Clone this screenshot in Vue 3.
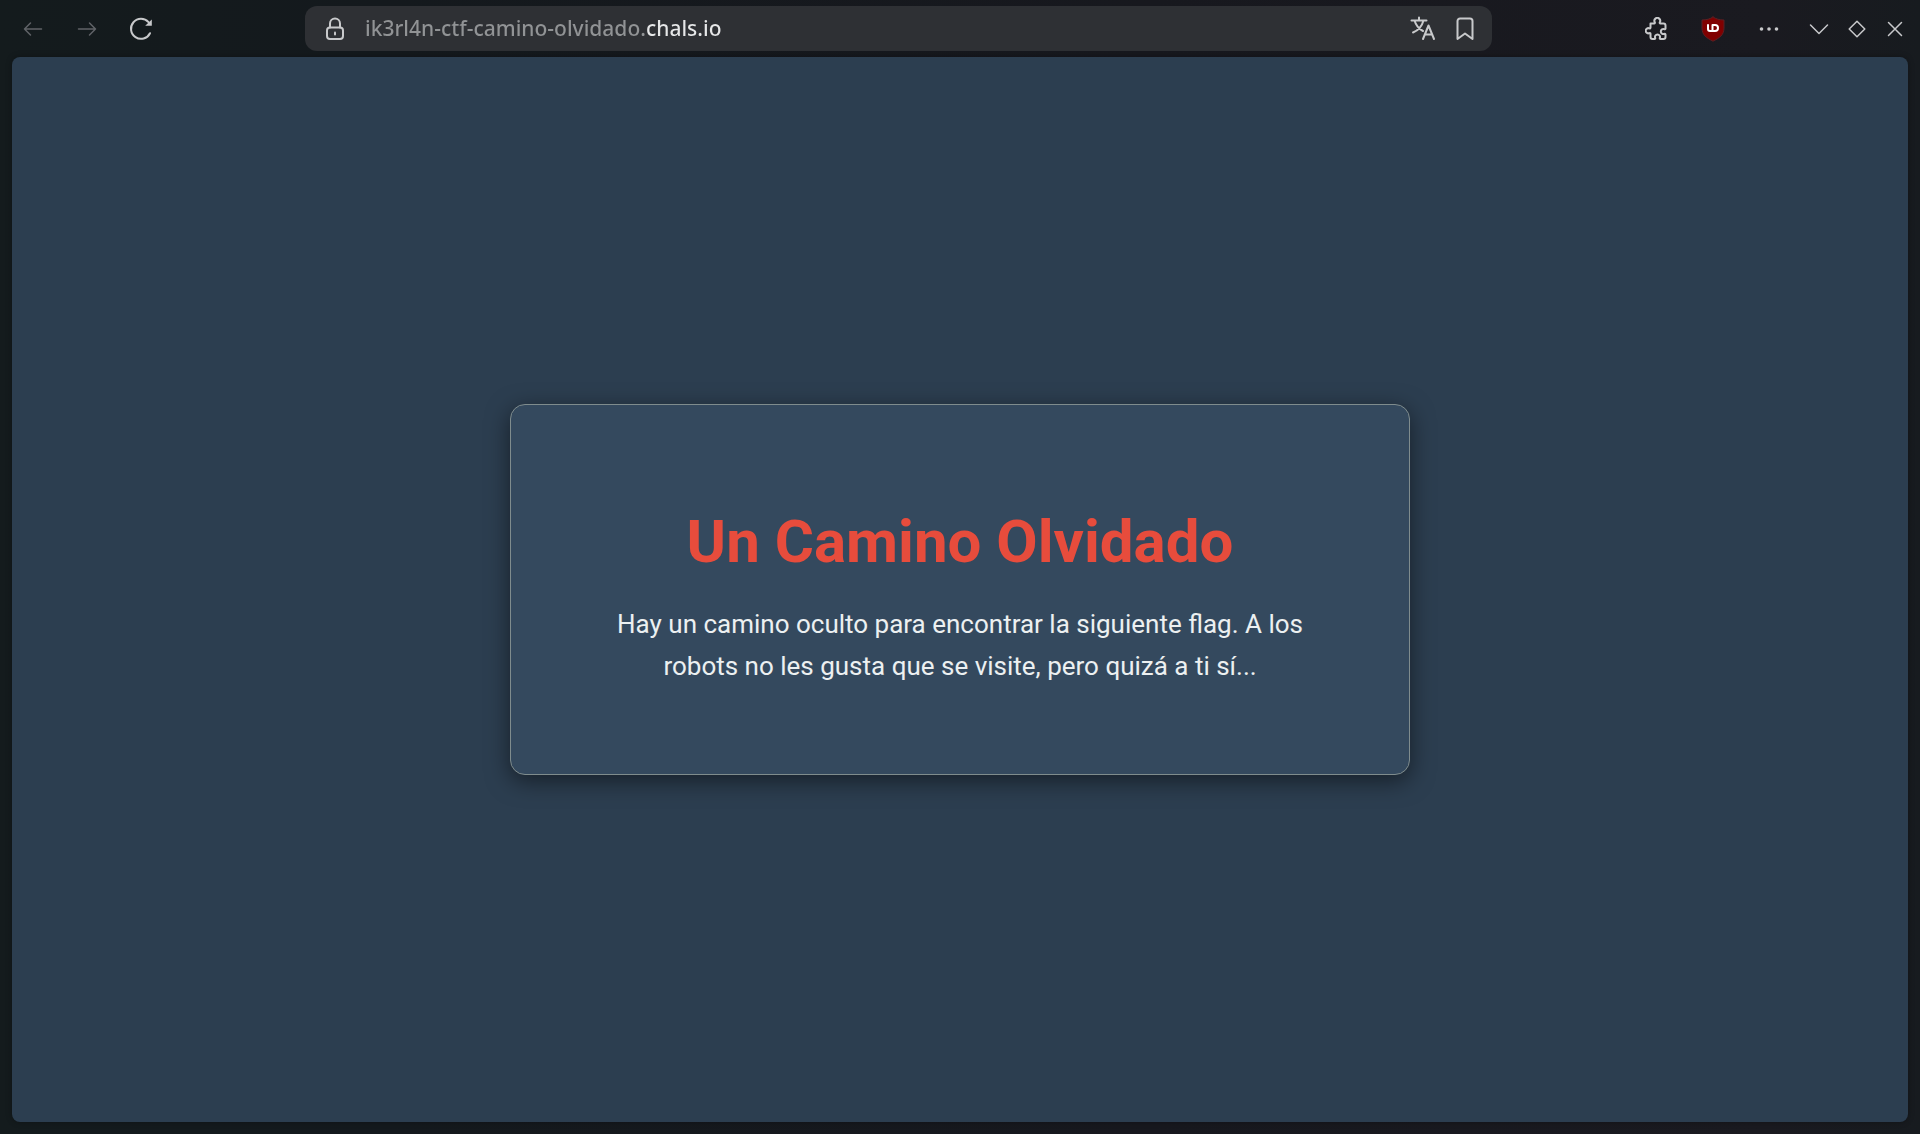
<script setup>
import { ref } from 'vue'

const address = ref('ik3rl4n-ctf-camino-olvidado.chals.io')
</script>

<template>
  <div class="browser">
    <header class="toolbar">
      <nav class="nav" aria-label="Navegación">
        <button type="button" class="tool wide dim" aria-label="Atrás">
          <svg width="20" height="16" viewBox="0 0 20 16"><path d="M18.5 8H1.5M7.5 2L1.5 8l6 6" /></svg>
        </button>
        <button type="button" class="tool wide dim" aria-label="Adelante">
          <svg width="20" height="16" viewBox="0 0 20 16"><path d="M1.5 8h17M12.5 2l6 6-6 6" /></svg>
        </button>
        <button type="button" class="tool wide" aria-label="Recargar">
          <svg width="24" height="24" viewBox="0 0 24 24">
            <path class="bold" d="M21 16.2A10 10 0 1 1 19.5 5.2" />
            <path class="solid" d="M22.8 2.5v6.3h-6.6z" />
          </svg>
        </button>
      </nav>

      <form class="address" @submit.prevent>
        <button type="button" class="tool lock" aria-label="Información del sitio">
          <svg width="20" height="24" viewBox="0 0 20 24">
            <rect class="bold" x="2" y="10.5" width="16" height="11.5" rx="3" />
            <path class="bold" d="M5 10.5V6.500a5 5 0 0 1 10 0v4" />
            <path class="bold" d="M10 15.500v2" />
          </svg>
        </button>
        <input v-model="address" class="url" type="text" aria-label="Dirección" spellcheck="false" />
        <button type="button" class="tool small" aria-label="Traducir">
          <svg width="26" height="26" viewBox="0 1 26 26">
            <path class="bold" d="M1.5 5.5h15M9 2.500v3M4.500 5.500c1.500 5 4.500 8.500 8.500 10.500M13.500 5.500C12 11 8 15.500 3 17.500" />
            <path class="bold" d="M13 24l5.500-13.500L24 24M15 19.500h7" />
          </svg>
        </button>
        <button type="button" class="tool small" aria-label="Guardar marcador">
          <svg width="18" height="24" viewBox="0 0 18 24"><path class="bold" d="M1.500 22V4a2.500 2.500 0 0 1 2.500-2.500h10A2.500 2.500 0 0 1 16.500 4v18L9 16.500z" /></svg>
        </button>
      </form>

      <div class="extensions">
        <button type="button" class="tool extension" aria-label="Extensiones">
          <svg width="24" height="24" viewBox="0 0 24 24">
            <path class="bold" d="M5.500 6.500h3.700a.8.8 0 0 0 .6-1.200 2.900 2.900 0 1 1 5 0 .8.8 0 0 0 .6 1.200h3.100a2 2 0 0 1 2 2v3a.8.8 0 0 1-1.200.7 2.500 2.500 0 1 0 0 4.600.8.8 0 0 1 1.200.7V20a2 2 0 0 1-2 2h-3a.8.8 0 0 1-.7-1.100 2.500 2.500 0 1 0-4.600 0 .8.8 0 0 1-.7 1.100h-2a2 2 0 0 1-2-2v-3.200a.8.8 0 0 0-1.100-.7 2.600 2.600 0 1 1 0-4.700.8.8 0 0 0 1.100-.7z" />
          </svg>
        </button>
        <button type="button" class="tool extension" aria-label="uBlock Origin">
          <svg width="24" height="26" viewBox="0 0 24 26">
            <path class="shield" d="M12 1c3 2 6.500 3 11 3v8c0 7-4.500 10-11 13.200C5.500 22 1 19 1 12V4c4.500 0 8-1 11-3z" />
            <path class="badge" d="M7 9v4a2 2 0 0 0 2 2h2.500V9h2.500a3 3 0 0 1 0 6h-2.500" />
          </svg>
        </button>
        <button type="button" class="tool extension" aria-label="Menú">
          <svg width="22" height="6" viewBox="0 0 22 6">
            <circle class="solid" cx="3.500" cy="3" r="1.800" />
            <circle class="solid" cx="11" cy="3" r="1.800" />
            <circle class="solid" cx="18.500" cy="3" r="1.800" />
          </svg>
        </button>
      </div>

      <div class="window-controls">
        <button type="button" class="tool control" aria-label="Minimizar">
          <svg width="20" height="18" viewBox="0 0 20 18"><path d="M1.500 5L10 13.500 18.500 5" /></svg>
        </button>
        <button type="button" class="tool control" aria-label="Restaurar">
          <svg width="18" height="18" viewBox="0 0 18 18"><path d="M9 1.200L16.800 9 9 16.800 1.200 9z" /></svg>
        </button>
        <button type="button" class="tool control" aria-label="Cerrar">
          <svg width="16" height="16" viewBox="0 0 16 16"><path d="M1.500 1.500l13 13M14.500 1.500l-13 13" /></svg>
        </button>
      </div>
    </header>

    <main class="page">
      <section class="card">
        <h1>Un Camino Olvidado</h1>
        <p>Hay un camino oculto para encontrar la siguiente flag. A los robots no les gusta que se visite, pero quizá a ti sí...</p>
      </section>
    </main>
  </div>
</template>

<style>
body {
  margin: 0;
}
</style>

<style scoped>
.browser {
  box-sizing: border-box;
  min-height: 100vh;
  display: flex;
  flex-direction: column;
  padding: 0 12px 12px;
  background: linear-gradient(90deg, #141b1d, #14191d 20%, #17181e 60%, #1a1a20 92%, #171b1f);
}

.toolbar {
  display: flex;
  align-items: center;
  height: 57px;
  margin: 0 -6px;
}

.nav,
.extensions,
.window-controls {
  display: flex;
}

.window-controls {
  margin-left: 3px;
}

.tool {
  display: flex;
  flex: none;
  align-items: center;
  justify-content: center;
  height: 44px;
  padding: 0;
  border: 0;
  background: none;
  color: #c8c9cb;
}

.wide {
  width: 54px;
}

.extension {
  width: 56px;
}

.control {
  width: 38px;
}

.small {
  width: 42px;
}

.lock {
  width: 60px;
}

.dim {
  color: #606367;
}

svg {
  display: block;
  fill: none;
  stroke: currentColor;
  stroke-width: 1.5;
  stroke-linecap: round;
  stroke-linejoin: round;
}

.bold {
  stroke-width: 2;
}

.solid {
  fill: currentColor;
  stroke: none;
}

.shield {
  fill: #800000;
  stroke: #5a2024;
  stroke-width: 1;
}

.badge {
  stroke: #ffffff;
  stroke-width: 2;
}

.address {
  display: flex;
  flex: 1;
  align-items: center;
  min-width: 0;
  height: 45px;
  margin: 0 137px;
  padding-right: 6px;
  border-radius: 12px;
  box-sizing: border-box;
  background: #2e3034;
}

.url {
  box-sizing: border-box;
  flex: 1;
  min-width: 0;
  height: 44px;
  padding: 0 0 2px;
  border: 0;
  outline: 0;
  background: linear-gradient(90deg, #919395 280px, #e6e7e8 280px);
  background-clip: text;
  color: transparent;
  font: 500 21px "Noto Sans", sans-serif;
}

.page {
  display: flex;
  flex: 1;
  align-items: center;
  justify-content: center;
  border-radius: 8px;
  background: #2c3e50;
  box-shadow: 0 0 6px rgba(0, 0, 0, 0.3);
  font-family: Roboto, sans-serif;
}

.card {
  box-sizing: border-box;
  width: 100%;
  max-width: 900px;
  padding: 60px 72px;
  border: 1px solid #7f8c8d;
  border-radius: 15px;
  background: #34495e;
  box-shadow: 0 6px 23px rgba(0, 0, 0, 0.5);
  text-align: center;
}

h1 {
  margin: 41px 0 25px;
  color: #e74c3c;
  font-size: 60px;
  font-weight: 700;
  line-height: 72px;
}

p {
  margin: 0 0 27px;
  color: #ecf0f1;
  font-size: 26px;
  line-height: 42px;
}
</style>
